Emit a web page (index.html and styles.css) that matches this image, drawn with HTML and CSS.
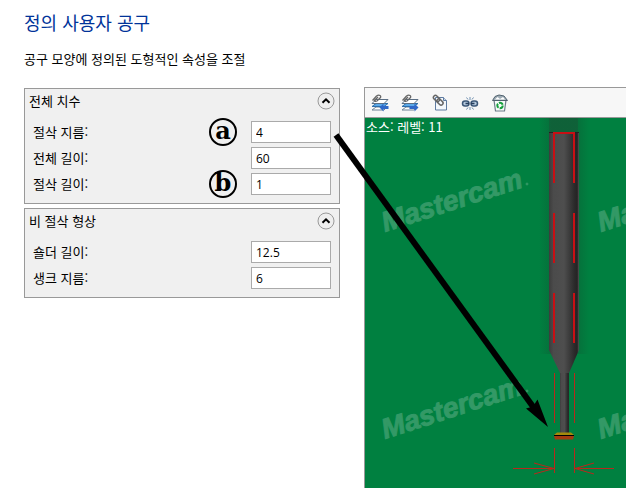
FILE: index.html
```html
<!DOCTYPE html>
<html lang="ko">
<head>
    <meta charset="UTF-8">
    <meta name="viewport" content="width=device-width, initial-scale=1.0">
    <title>정의 사용자 공구</title>
    <link rel="stylesheet" href="styles.css">
</head>
<body>
    <div class="page">
        <header class="intro">
            <h1>정의 사용자 공구</h1>
            <p>공구 모양에 정의된 도형적인 속성을 조절</p>
        </header>
        <main class="content">
            <form class="params">
                <section class="group">
                    <div class="group-head">
                        <h2>전체 치수</h2>
                        <button type="button" class="toggle" aria-label="전체 치수 접기">
                            <svg width="18" height="18" viewBox="0 0 18 18"><circle cx="9" cy="9" r="8"/><path d="M5.5 10.8 9 7.3l3.5 3.5"/></svg>
                        </button>
                    </div>
                    <div class="field">
                        <label for="cutDiameter">절삭 지름:</label>
                        <span class="mark">a</span>
                        <input type="text" id="cutDiameter" value="4">
                    </div>
                    <div class="field">
                        <label for="totalLength">전체 길이:</label>
                        <input type="text" id="totalLength" value="60">
                    </div>
                    <div class="field">
                        <label for="cutLength">절삭 길이:</label>
                        <span class="mark">b</span>
                        <input type="text" id="cutLength" value="1">
                    </div>
                </section>
                <section class="group">
                    <div class="group-head">
                        <h2>비 절삭 형상</h2>
                        <button type="button" class="toggle" aria-label="비 절삭 형상 접기">
                            <svg width="18" height="18" viewBox="0 0 18 18"><circle cx="9" cy="9" r="8"/><path d="M5.5 10.8 9 7.3l3.5 3.5"/></svg>
                        </button>
                    </div>
                    <div class="field">
                        <label for="shoulderLength">숄더 길이:</label>
                        <input type="text" id="shoulderLength" value="12.5">
                    </div>
                    <div class="field">
                        <label for="shankDiameter">생크 지름:</label>
                        <input type="text" id="shankDiameter" value="6">
                    </div>
                </section>
            </form>
            <section class="viewer">
                <div class="toolbar">
                    <button type="button" aria-label="레벨 가져오기">
                        <svg width="18" height="18" viewBox="0 0 18 18">
                            <path d="M1 16l4-3h11l-3 3z" fill="#fff" stroke="#6f8296"/>
                            <path d="M1 12.500l4-3h12l-4 3z" fill="#5aa9ea" stroke="#2f6ea8"/>
                            <path d="M1 9.500l4-4h12l-4 4z" fill="#fff" stroke="#5c6f84"/>
                            <path d="M1.500 6.500l4-4.500q2-1.500 3.500-.500t0 2.500L6 7Q4 8 3.500 6.500L7 3" fill="none" stroke="#666" stroke-width="1.300"/>
                            <path d="M8.500 13.500l4-4v2.500h5v3h-5v2.500z" fill="#2f68c8"/>
                        </svg>
                    </button>
                    <button type="button" aria-label="레벨 내보내기">
                        <svg width="18" height="18" viewBox="0 0 18 18">
                            <path d="M1 16l4-3h11l-3 3z" fill="#fff" stroke="#6f8296"/>
                            <path d="M1 12.500l4-3h12l-4 3z" fill="#5aa9ea" stroke="#2f6ea8"/>
                            <path d="M1 9.500l4-4h12l-4 4z" fill="#fff" stroke="#5c6f84"/>
                            <path d="M1.500 6.500l4-4.500q2-1.500 3.500-.500t0 2.500L6 7Q4 8 3.500 6.500L7 3" fill="none" stroke="#666" stroke-width="1.300"/>
                            <path d="M17.500 13.500l-4-4v2.500h-5v3h5v2.500z" fill="#2f68c8"/>
                        </svg>
                    </button>
                    <button type="button" aria-label="파일 연결">
                        <svg width="18" height="18" viewBox="0 0 18 18">
                            <path d="M4.500 3.500h8l3 3v9.500h-11z" fill="#f4f8fc" stroke="#5f7ba0"/>
                            <path d="M12.500 3.500v3h3" fill="#c9d8e8" stroke="#5f7ba0"/>
                            <g stroke="#666" fill="none" stroke-width="1.500"><rect x="2" y="2.500" width="7" height="4" rx="2" transform="rotate(45 5.500 4.500)"/><rect x="5.500" y="6" width="7" height="4" rx="2" transform="rotate(45 9 8)"/></g>
                        </svg>
                    </button>
                    <button type="button" aria-label="연결 끊기">
                        <svg width="18" height="18" viewBox="0 0 18 18">
                            <g fill="#b4c8dd" stroke="#3d5878" stroke-width="1.500"><rect x="1.500" y="7" width="6.500" height="5" rx="2.500"/><rect x="10" y="7" width="6.500" height="5" rx="2.500"/></g>
                            <path d="M4.500 9.500h3.500M10 9.500h3.500" stroke="#263e5c" stroke-width="1.500"/>
                            <path d="M9 3v3M5.500 3.500l1.500 2M12.500 3.500l-1.500 2M9 13v3M5.500 15.500l1.500-2M12.500 15.500l-1.500-2" stroke="#6f8fb0"/>
                        </svg>
                    </button>
                    <button type="button" aria-label="휴지통">
                        <svg width="18" height="18" viewBox="0 0 18 18">
                            <path d="M3 6l1.500 11h9L15 6z" fill="#f8fbfb" stroke="#6b7c88" stroke-width="1.200"/>
                            <path d="M1.500 6.500L4 2.500l4-1.500 5 1 3.500 4.500z" fill="#9eacb5" stroke="#50616e"/>
                            <path d="M4 5.500l2.500-2.500 2.500 2 3-2 2 2.500z" fill="#fff"/>
                            <circle cx="9" cy="11.500" r="2.700" fill="none" stroke="#16a03c" stroke-width="2" stroke-dasharray="4.500 1.150"/>
                        </svg>
                    </button>
                </div>
                <div class="canvas">
                    <p class="source">소스: 레벨: 11</p>
                    <svg class="scene" width="100%" height="100%">
                        <defs>
                            <linearGradient id="steel">
                                <stop offset="0" stop-color="#3c3c3c"/>
                                <stop offset=".15" stop-color="#4b4b4b"/>
                                <stop offset=".5" stop-color="#4e4e4e"/>
                                <stop offset=".85" stop-color="#2a2a2a"/>
                                <stop offset=".94" stop-color="#242424"/>
                                <stop offset="1" stop-color="#555"/>
                            </linearGradient>
                            <linearGradient id="shade">
                                <stop offset="0" stop-color="#222" stop-opacity="0"/>
                                <stop offset=".25" stop-color="#222" stop-opacity=".18"/>
                                <stop offset=".75" stop-color="#222" stop-opacity=".18"/>
                                <stop offset="1" stop-color="#222" stop-opacity="0"/>
                            </linearGradient>
                        </defs>
                        <!-- watermark -->
                        <g class="watermark">
                            <text transform="translate(20 114) rotate(-18)">Mastercam</text>
                            <text transform="translate(236 114) rotate(-18)">Mastercam</text>
                            <text transform="translate(20 321) rotate(-18)">Mastercam</text>
                            <text transform="translate(236 321) rotate(-18)">Mastercam</text>
                            <circle cx="162" cy="66" r="1"/>
                            <circle cx="162" cy="273" r="1"/>
                        </g>
                        <!-- tool body -->
                        <rect x="174" y="0" width="50" height="236" fill="url(#shade)"/>
                        <rect x="184" y="0" width="29" height="14" fill="#333" opacity=".22"/>
                        <path d="M184 14h30v218l-10 23h-9l-11-23z" fill="url(#steel)"/>
                        <path d="M195 255h9v61h-9z" fill="url(#steel)"/>
                        <path d="M184 14.500h30" stroke="#222"/>
                        <path d="M189 317l3-2.500h14l3 2.500z" fill="#a48a0c"/>
                        <path d="M189 317h20v1H189z" fill="#000"/>
                        <path d="M189 318h20l-1 3.500h-18z" fill="#a33a10"/>
                        <!-- dimension lines -->
                        <g class="dims">
                            <path d="M188 15H210"/>
                            <path d="M189 14V65"/>
                            <path d="M189 95V145"/>
                            <path d="M189 175V225"/>
                            <path d="M209 14V65"/>
                            <path d="M209 95V145"/>
                            <path d="M209 175V225"/>
                        </g>
                        <g class="dims thin">
                            <path d="M189.5 255V305"/>
                            <path d="M209.5 255V305"/>
                            <path d="M189.5 330V355"/>
                            <path d="M209.5 330V355"/>
                            <path d="M148 350.5H189"/>
                            <path d="M210 350.5H249"/>
                            <path d="M169 345L189 350.5L169 356"/>
                            <path d="M229 345L210 350.5L229 356"/>
                        </g>
                    </svg>
                </div>
            </section>
            <!-- pointer from the diameter field to the cutting edge -->
            <svg class="pointer" width="220" height="300" viewBox="0 0 220 300">
                <path d="M4 7l198 273" stroke="#000" stroke-width="6"/>
                <path d="M216 299l-22-18.500 7-2 4.500-7z"/>
            </svg>
        </main>
    </div>
</body>
</html>
```

FILE: styles.css
```css
* {
    box-sizing: border-box;
}
body {
    margin: 0;
    background-color: #fff;
    color: #000;
    font-family: "Noto Sans CJK KR", sans-serif;
    font-size: 13px;
    line-height: 18px;
}
h1, h2, p {
    margin: 0;
    font-weight: normal;
}
.page {
    display: flex;
    flex-direction: column;
    min-height: 100vh;
}
.intro {
    padding: 8px 24px 20px;
}
.intro h1 {
    margin-bottom: 14px;
    color: #003399;
    font-size: 18px;
    line-height: 28px;
}
.content {
    position: relative;
    display: grid;
    grid-template-columns: 316px 1fr;
    gap: 24px;
    flex: 1;
    padding-left: 24px;
}
.params {
    display: flex;
    flex-direction: column;
    gap: 4px;
}
.group {
    display: flex;
    flex-direction: column;
    gap: 4px;
    padding: 3px 8px 8px;
    background-color: #f0f0f0;
    border: 1px solid #999;
}
.group-head {
    display: flex;
    justify-content: space-between;
    align-items: center;
    margin: 0 -4px 7px;
}
.group-head h2 {
    font-size: 13px;
}
.toggle {
    display: flex;
    padding: 0;
    background: none;
    border: none;
}
.toggle circle {
    fill: #eee;
    stroke: #999;
}
.toggle path {
    fill: none;
    stroke: #000;
    stroke-width: 2;
}
.field {
    display: flex;
    align-items: center;
    height: 22px;
}
.field label {
    margin-right: auto;
}
.field input {
    width: 80px;
    height: 22px;
    padding: 0 4px;
    background-color: #fff;
    border: 1px solid #aaa;
    font-family: "Open Sans", sans-serif;
    font-size: 12px;
}
.mark {
    width: 28px;
    height: 28px;
    margin: -4px 14px -4px 0;
    border: 2px solid #000;
    border-radius: 50%;
    font-family: "DejaVu Serif", serif;
    font-size: 24px;
    font-weight: bold;
    line-height: 22px;
    text-align: center;
}
.viewer {
    display: flex;
    flex-direction: column;
    min-width: 0;
    margin-top: -1px;
    border-top: 1px solid #999;
    border-left: 1px solid #999;
}
.toolbar {
    display: flex;
    align-items: center;
    gap: 12px;
    height: 30px;
    padding-left: 6px;
    background-color: #f7f7f7;
    border-bottom: 1px solid #999;
}
.toolbar button {
    display: flex;
    padding: 0;
    background: none;
    border: none;
}
.canvas {
    position: relative;
    flex: 1;
    overflow: hidden;
    background-color: #008040;
}
.source {
    padding-left: 1px;
    color: #fff;
}
.scene {
    position: absolute;
    top: 0;
    left: 0;
}
.watermark {
    fill: #339966;
    stroke: #339966;
    stroke-width: 1;
    font-family: "Liberation Sans", sans-serif;
    font-size: 28px;
    font-style: italic;
    font-weight: bold;
}
.dims {
    fill: none;
    stroke: #c80f14;
    stroke-width: 2;
}
.dims.thin {
    stroke: #b8281c;
    stroke-width: 1;
}
.pointer {
    position: absolute;
    top: 40px;
    left: 332px;
    pointer-events: none;
}
```
